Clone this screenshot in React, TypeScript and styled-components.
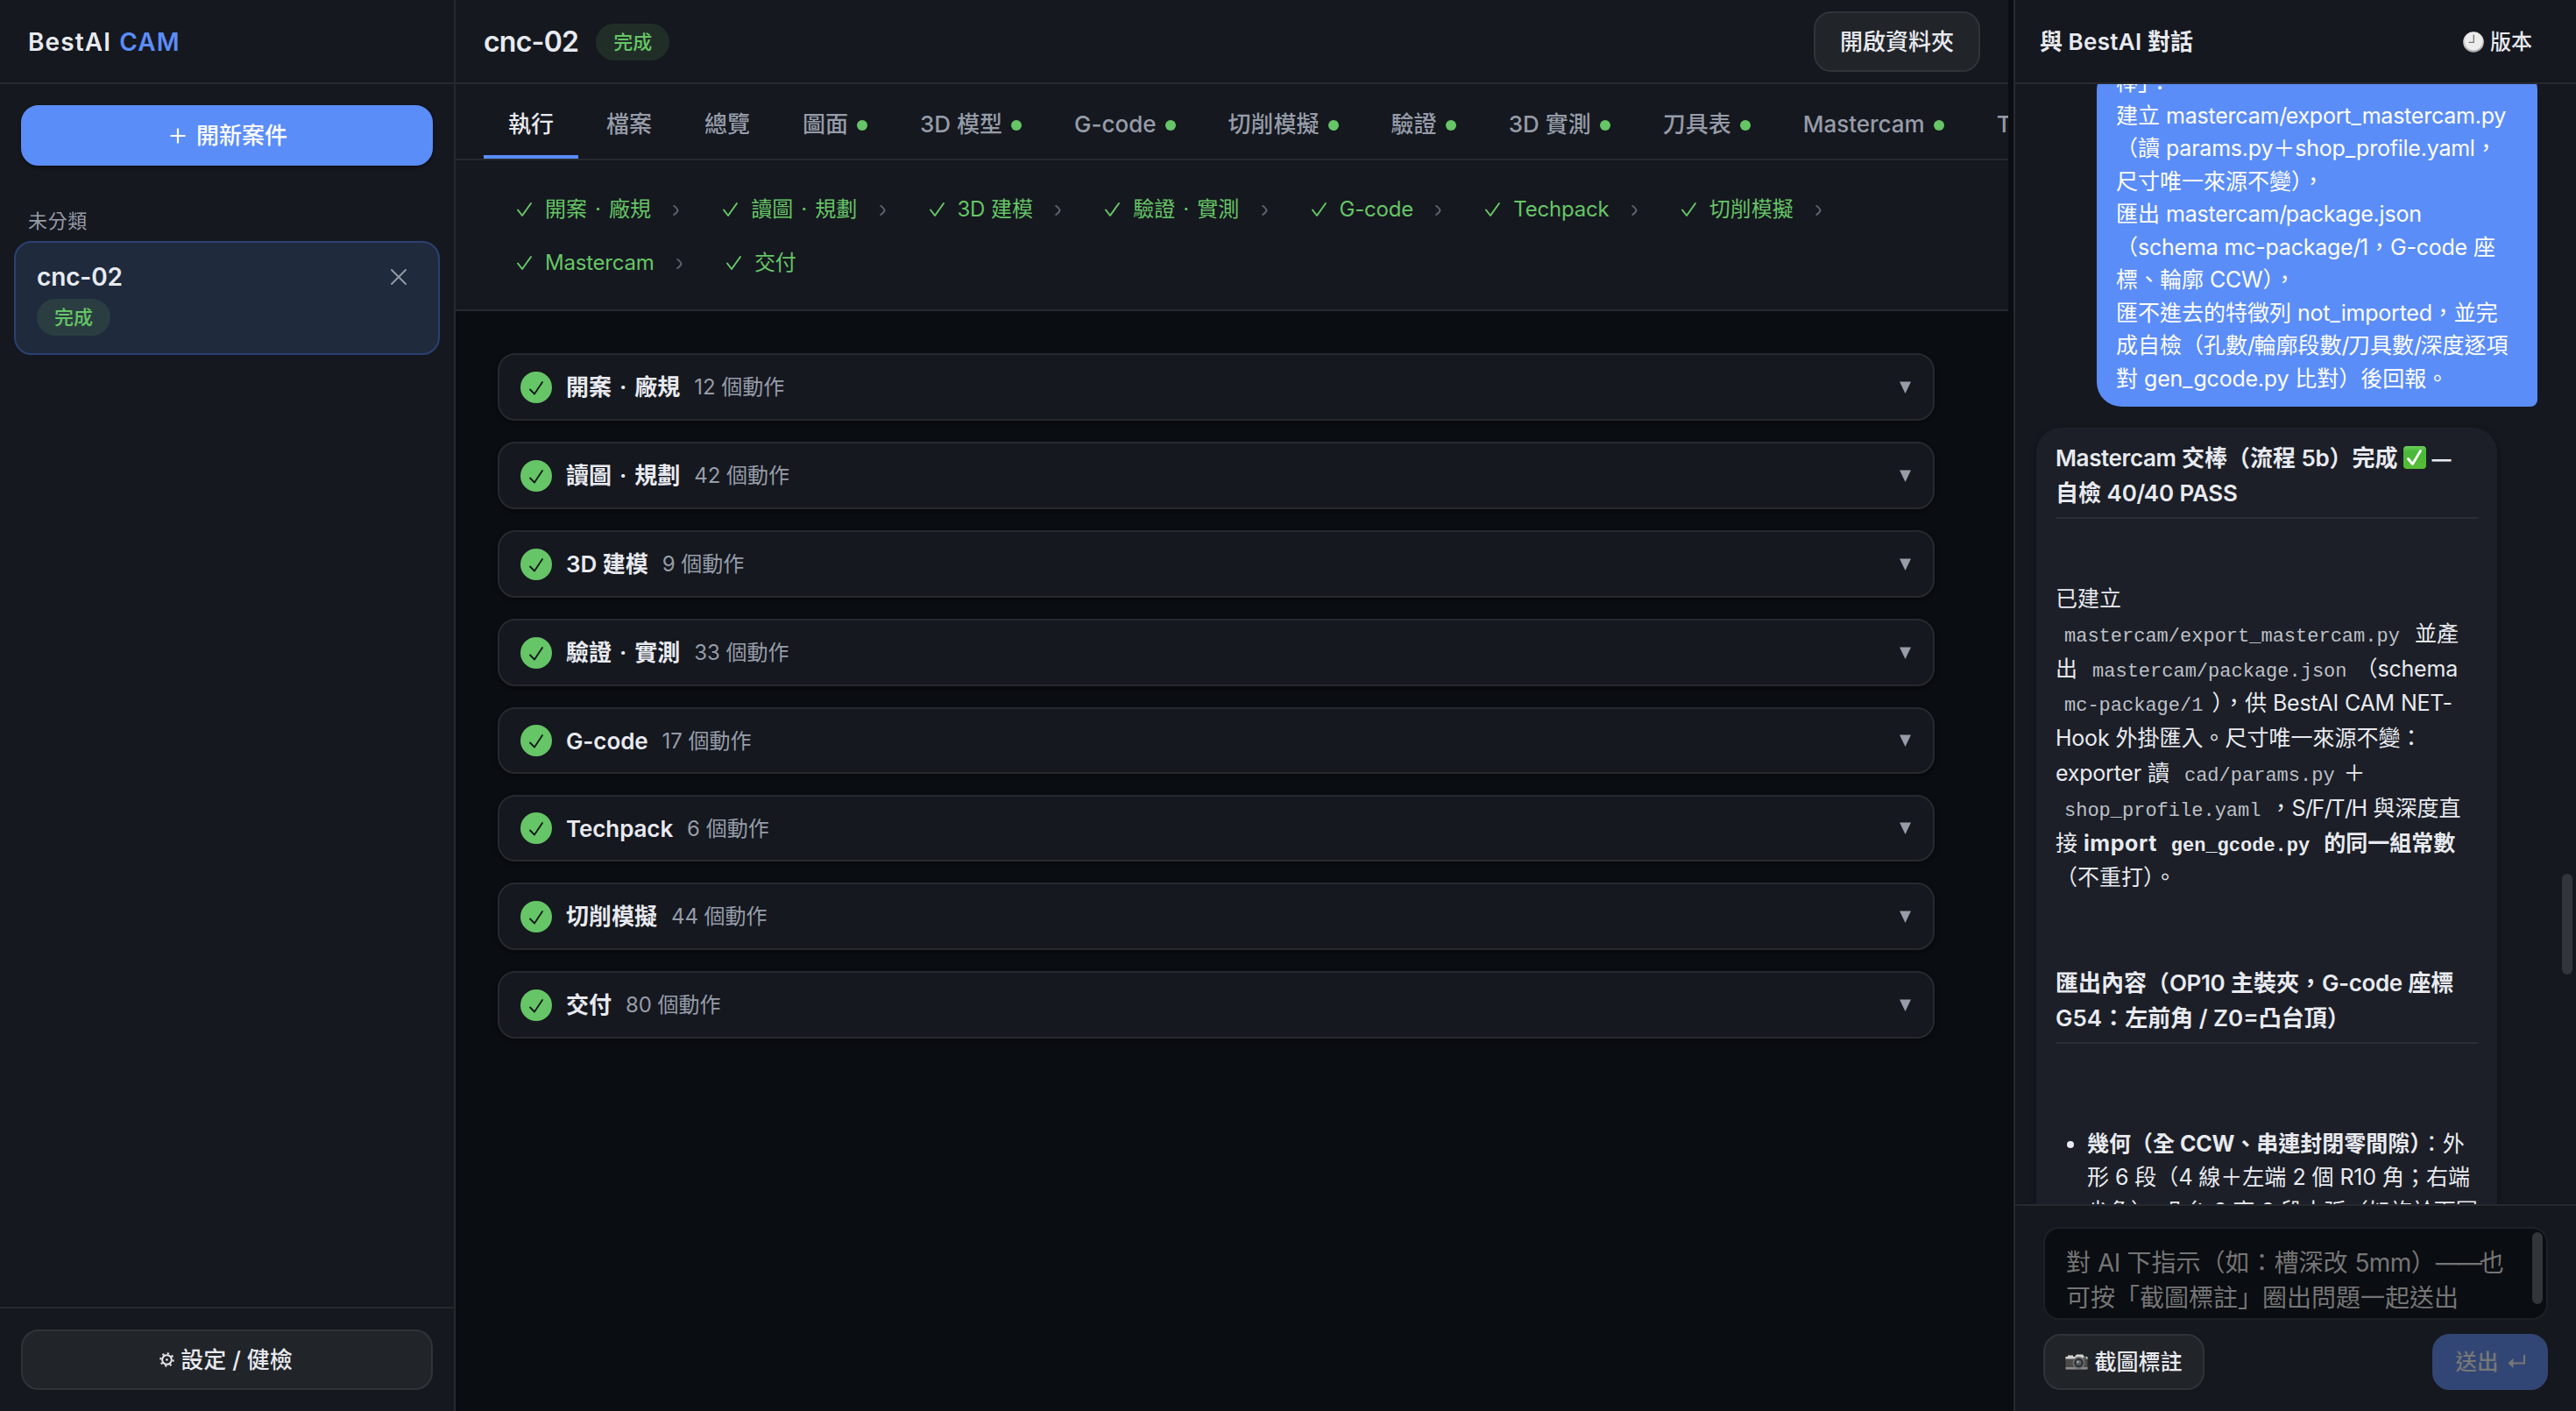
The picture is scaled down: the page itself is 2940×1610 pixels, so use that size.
import React from "react";
import styled, { createGlobalStyle, css } from "styled-components";

const SANS = `Inter, "Noto Sans CJK TC", sans-serif`;
const MONO = `"Courier New", "Liberation Mono", "Noto Sans CJK TC", monospace`;

const c = {
  bg: "#0a0d11",
  panel: "#15181f",
  line: "#26292e",
  text: "#e8eaf0",
  muted: "#969ca8",
  accent: "#5b8df8",
  green: "#66c566",
};

const Global = createGlobalStyle`
  * { box-sizing: border-box; }
  html, body { margin: 0; padding: 0; background: ${c.bg}; }
  body { width: 2940px; height: 1610px; overflow: hidden; }
`;

const Shell = styled.div`
  display: flex;
  width: 2940px;
  height: 1610px;
  background: ${c.bg};
  color: ${c.text};
  font-family: ${SANS};
  font-size: 26px;
  line-height: 36px;
  overflow: hidden;
`;

const Latin = styled.span<{ $track: number }>`
  letter-spacing: ${(p) => p.$track}em;
`;

const MidDot = styled.span`
  margin: 0 0.095em;
`;

/* Splits mixed text so that latin runs, slashes and dashes get their own tracking. */
function Mixed({ children, track = -0.009 }: { children: string; track?: number }) {
  const parts = children.split(/([A-Za-z0-9\-.=]+|\/|_|—+|·)/);
  return (
    <>
      {parts.map((p, i) => {
        if (i % 2 === 0) return p;
        if (p === "·") return <MidDot key={i}>{p}</MidDot>;
        const t = p === "/" ? -0.06 : p === "_" ? 0.04 : p[0] === "—" ? -0.11 : track;
        return <Latin key={i} $track={t}>{p}</Latin>;
      })}
    </>
  );
}

/* ---------- sidebar ---------- */

const Sidebar = styled.aside`
  flex: 0 0 520px;
  display: flex;
  flex-direction: column;
  background: ${c.panel};
  border-right: 2px solid ${c.line};
`;

const barBase = css`
  flex: 0 0 96px;
  display: flex;
  align-items: center;
  background: ${c.panel};
  border-bottom: 2px solid ${c.line};
`;

const Brand = styled.div`
  ${barBase}
  padding: 2px 32px 0;
  gap: 9px;
  font-size: 28px;
  font-weight: 600;
  letter-spacing: 0.04em;
`;

const BrandAccent = styled.span`
  color: ${c.accent};
`;

const Button = styled.button<{ $primary?: boolean }>`
  display: flex;
  align-items: center;
  justify-content: center;
  height: 69px;
  padding: 0 28px;
  border-radius: 20px;
  border: 2px solid ${(p) => (p.$primary ? c.accent : "#303338")};
  background: ${(p) => (p.$primary ? c.accent : "#212428")};
  color: ${(p) => (p.$primary ? "#fff" : c.text)};
  font: 500 26px/36px ${SANS};
  box-shadow: ${(p) => (p.$primary ? "0 2px 4px rgba(0,0,0,0.4)" : "none")};
`;

const NewButton = styled(Button)`
  margin: 24px 24px 0;
  padding: 0 28px 0 32px;
  width: 470px;
  gap: 12px;
`;

const GroupLabel = styled.div`
  margin: 46px 32px 6px;
  height: 34px;
  line-height: 35px;
  font-size: 22px;
  letter-spacing: 0.03em;
  color: ${c.muted};
`;

const CaseCard = styled.div`
  margin: 0 16px;
  width: 486px;
  height: 130px;
  padding: 20px 22px 0 24px;
  border: 2px solid #2b416f;
  border-radius: 20px;
  background: #1f2a3d;
`;

const CaseRow = styled.div`
  display: flex;
  align-items: center;
  justify-content: space-between;
  height: 38px;
  padding-right: 14px;
  font-size: 28px;
  font-weight: 600;
`;

const Badge = styled.span<{ $on?: boolean }>`
  display: flex;
  align-items: center;
  justify-content: center;
  width: 84px;
  height: 42px;
  border-radius: 21px;
  background: ${(p) => (p.$on ? "#2a3e42" : "#212e28")};
  color: ${c.green};
  font-size: 22px;
  font-weight: 500;
`;

const CaseBadge = styled(Badge)`
  margin-top: 6px;
`;

const SideFoot = styled.div`
  margin-top: auto;
  padding: 24px 24px;
  height: 119px;
  border-top: 2px solid ${c.line};
`;

const SettingsButton = styled(Button)`
  width: 470px;
  padding: 0 30px 0 28px;
  gap: 7px;
`;

/* ---------- main ---------- */

const Main = styled.main`
  flex: 0 0 1772px;
  display: flex;
  flex-direction: column;
  overflow: hidden;
`;

const MainHead = styled.header`
  ${barBase}
  padding: 1px 32px 0;
`;

const MainTitle = styled.h1`
  margin: 0 20px 0 0;
  font-size: 32px;
  font-weight: 600;
`;

const OpenButton = styled(Button)`
  margin-left: auto;
`;

const Tabs = styled.nav`
  flex: 0 0 87px;
  display: flex;
  gap: 4px;
  padding-left: 32px;
  overflow: hidden;
  background: ${c.panel};
  border-bottom: 2px solid ${c.line};
`;

const Tab = styled.div<{ $active?: boolean }>`
  flex: none;
  display: flex;
  align-items: center;
  gap: 10px;
  padding: 10px 28px 0;
  border-bottom: 4px solid ${(p) => (p.$active ? c.accent : "transparent")};
  color: ${(p) => (p.$active ? c.text : c.muted)};
  font-weight: 500;
  white-space: nowrap;
`;

const Dot = styled.i`
  width: 12px;
  height: 12px;
  margin-top: 3px;
  border-radius: 50%;
  background: ${c.green};
`;

const Steps = styled.div`
  flex: 0 0 172px;
  display: flex;
  flex-wrap: wrap;
  align-content: flex-start;
  row-gap: 25px;
  padding: 38px 40px 0 68px;
  background: ${c.panel};
  border-bottom: 2px solid ${c.line};
  color: ${c.green};
  font-size: 24px;
`;

const Step = styled.div`
  display: flex;
  align-items: center;
  height: 36px;
  margin-right: 46.8px;
  white-space: nowrap;
`;

const StepLabel = styled.span`
  margin: 0 24.5px 1px 14px;
`;

const Groups = styled.div`
  display: flex;
  flex-direction: column;
  gap: 24px;
  padding: 48px 84px 0 48px;
`;

const Group = styled.section<{ $short?: boolean }>`
  display: flex;
  align-items: center;
  height: ${(p) => (p.$short ? 76 : 77)}px;
  padding: 0 24px;
  border: 2px solid ${c.line};
  border-radius: 20px;
  background: ${c.panel};
  box-shadow: 0 2px 4px rgba(0, 0, 0, 0.4);
`;

const Disc = styled.span`
  display: flex;
  align-items: center;
  justify-content: center;
  width: 36px;
  height: 36px;
  border-radius: 50%;
  background: ${c.green};
`;

const GroupTitle = styled.h2`
  margin: 0 16px;
  padding-top: 1px;
  font-size: 26px;
  font-weight: 600;
`;

const GroupCount = styled.span`
  padding-top: 1px;
  font-size: 24px;
  color: ${c.muted};
`;

const Caret = styled.svg`
  margin-left: auto;
`;

/* ---------- chat ---------- */

const Chat = styled.aside`
  flex: 0 0 642px;
  display: flex;
  flex-direction: column;
  margin-left: 6px;
  background: ${c.panel};
  border-left: 2px solid ${c.line};
`;

const ChatHead = styled.header`
  ${barBase}
  justify-content: space-between;
  padding: 1px 50px 0 28px;
  font-weight: 600;
`;

const Version = styled.span`
  display: flex;
  align-items: center;
  gap: 7px;
  font-size: 24px;
  font-weight: 500;
`;

const Thread = styled.div`
  position: relative;
  flex: 0 0 1278px;
  display: flex;
  flex-direction: column;
  overflow: hidden;
`;

const UserBubble = styled.div`
  align-self: flex-end;
  flex: none;
  width: 503px;
  margin: -21px 44px 0 0;
  padding: 1px 0 13px 22px;
  border-radius: 28px 28px 8px 28px;
  background: ${c.accent};
  color: #fff;
  font-size: 25px;
`;

const Line = styled.div<{ $h: number }>`
  height: ${(p) => p.$h}px;
  line-height: ${(p) => p.$h}px;
  white-space: pre;
`;

const AiBubble = styled.div`
  flex: none;
  width: 526px;
  height: 1000px;
  margin: 24px 0 0 24px;
  padding: 15px 22px;
  border-radius: 28px 28px 0 0;
  background: #1c1f27;
  box-shadow: 0 2px 6px rgba(0, 0, 0, 0.35);
  font-size: 25px;
`;

const Heading = styled.div`
  padding-bottom: 7px;
  border-bottom: 2px solid #2b2e36;
  font-size: 26px;
  font-weight: 600;
`;

const Dash = styled.span`
  font-size: 22px;
  font-weight: 700;
`;

const Para = styled.div`
  margin: 72px 0 80px;
`;

const Strong = styled.b`
  font-weight: 700;
`;

const Code = styled.code`
  padding: 0 10px;
  font-family: ${MONO};
  font-size: 22px;
  color: #bdc0c7;
  ${Strong} & {
    color: ${c.text};
  }
`;

const Bullets = styled.ul`
  margin: 94.5px 0 0;
  padding: 0 0 0 36px;
`;

const Bar = styled.i<{ $h: number; $x: number; $y: number }>`
  position: absolute;
  right: ${(p) => p.$x}px;
  top: ${(p) => p.$y}px;
  width: 12px;
  height: ${(p) => p.$h}px;
  border-radius: 6px;
  background: #323539;
`;

const Composer = styled.footer`
  flex: 1;
  padding: 24px 32px;
  border-top: 2px solid ${c.line};
`;

const Input = styled.div`
  position: relative;
  height: 106px;
  padding: 19px 24px;
  border: 2px solid #1d2024;
  border-radius: 18px;
  background: ${c.bg};
  color: #757575;
  font-size: 28px;
`;

const Actions = styled.div`
  display: flex;
  justify-content: space-between;
  margin-top: 16px;
`;

const ShotButton = styled(Button)`
  height: 64px;
  width: 184px;
  padding: 0;
  gap: 7px;
  font-size: 25px;
`;

const SendButton = styled(Button)`
  height: 64px;
  width: 132px;
  padding: 0;
  gap: 10px;
  border-color: #324675;
  background: #324675;
  color: #777;
  font-size: 24.5px;
`;

/* ---------- icons ---------- */

const Tick = () => (
  <svg width="20" height="18" viewBox="0 0 20 18" fill="none" stroke="currentColor" strokeWidth="2" strokeLinecap="round" strokeLinejoin="round">
    <path d="M3 9.5 8 16 18 2" />
  </svg>
);

const Chevron = () => (
  <svg width="9" height="14" viewBox="0 0 9 14" fill="none" stroke="#5d626c" strokeWidth="2">
    <path d="M1.5 2.5 Q6 5.5 6.5 8 Q6 10.5 1.5 13.5" />
  </svg>
);

const DiscTick = () => (
  <svg width="36" height="36" viewBox="0 0 36 36" fill="none" stroke="#12161b" strokeWidth="1.8" strokeLinecap="round" strokeLinejoin="round">
    <path d="M11 20.5 16 25.5 25 12" />
  </svg>
);

const Plus = () => (
  <svg width="18" height="18" viewBox="0 0 18 18" stroke="#fff" strokeWidth="2.2">
    <path d="M9 0.5V17.5M0.5 9H17.5" />
  </svg>
);

const Cross = () => (
  <svg width="18" height="18" viewBox="0 0 18 18" stroke={c.muted} strokeWidth="1.8" strokeLinecap="round">
    <path d="M1 1 17 17M17 1 1 17" />
  </svg>
);

const Gear = () => (
  <svg width="17" height="17" viewBox="0 0 16 16" fill="none" stroke={c.text}>
    <circle cx="8" cy="8" r="5" strokeWidth="1.8" />
    <circle cx="8" cy="8" r="1.2" fill={c.text} stroke="none" />
    <circle cx="8" cy="8" r="6.8" strokeWidth="2" strokeDasharray="2.1 3.24" />
  </svg>
);

const Clock = () => (
  <svg width="24" height="24" viewBox="0 0 24 24">
    <defs>
      <linearGradient id="rim" x1="0" y1="0" x2="0" y2="1">
        <stop offset="0" stopColor="#f4f4f4" />
        <stop offset="1" stopColor="#a9a9ab" />
      </linearGradient>
    </defs>
    <circle cx="12" cy="12" r="11.8" fill="url(#rim)" />
    <circle cx="12" cy="11.6" r="10" fill="#ececec" />
    <path d="M12.3 3.5V12.3H6.5" fill="none" stroke="#77777a" strokeWidth="1.3" />
  </svg>
);

const Camera = () => (
  <svg width="26" height="18" viewBox="0 0 26 18">
    <path d="M0.5 3H3V1.5H9V3H11L13 0.5H20L22 3H25.5V6H0.5Z" fill="#d4d3ce" />
    <rect x="0.5" y="5.5" width="25" height="12" rx="1" fill="#4b4b4a" />
    <rect x="0.5" y="15" width="25" height="2.5" fill="#8d8c88" />
    <circle cx="15.5" cy="10" r="7" fill="#6f7172" />
    <circle cx="15.5" cy="10" r="5.3" fill="#2d3033" />
    <circle cx="15.5" cy="10" r="3.2" fill="#55595e" />
    <circle cx="14.5" cy="9" r="1.3" fill="#a9afb5" />
    <rect x="20.5" y="3.5" width="3.5" height="2" fill="#4b4b4a" />
  </svg>
);

const CheckBoxSvg = styled.svg`
  vertical-align: -3px;
`;

const CheckBox = () => (
  <CheckBoxSvg width="26" height="26" viewBox="0 0 26 26">
    <defs>
      <linearGradient id="box" x1="0" y1="0" x2="0" y2="1">
        <stop offset="0" stopColor="#6cd05a" />
        <stop offset="0.25" stopColor="#48b83a" />
        <stop offset="1" stopColor="#57bd35" />
      </linearGradient>
    </defs>
    <rect width="26" height="26" rx="4" fill="url(#box)" />
    <path d="M5.5 14.5 10.5 20.5 19.5 5.5" fill="none" stroke="#fff" strokeWidth="2.8" strokeLinecap="round" strokeLinejoin="round" />
  </CheckBoxSvg>
);

const Return = () => (
  <svg width="20" height="18" viewBox="0 0 20 18">
    <path d="M19 1V10.5H5" fill="none" stroke="#777" strokeWidth="2" />
    <path d="M0.5 10.5 6.5 5V16Z" fill="#777" />
  </svg>
);

/* ---------- data ---------- */

const tabs: { label: string; dot?: boolean; active?: boolean }[] = [
  { label: "執行", active: true },
  { label: "檔案" },
  { label: "總覽" },
  { label: "圖面", dot: true },
  { label: "3D 模型", dot: true },
  { label: "G-code", dot: true },
  { label: "切削模擬", dot: true },
  { label: "驗證", dot: true },
  { label: "3D 實測", dot: true },
  { label: "刀具表", dot: true },
  { label: "Mastercam", dot: true },
  { label: "Techpack", dot: true },
];

const steps = ["開案 · 廠規", "讀圖 · 規劃", "3D 建模", "驗證 · 實測", "G-code", "Techpack", "切削模擬", "Mastercam", "交付"];

const groups: { title: string; count: number; short?: boolean }[] = [
  { title: "開案 · 廠規", count: 12 },
  { title: "讀圖 · 規劃", count: 42 },
  { title: "3D 建模", count: 9 },
  { title: "驗證 · 實測", count: 33 },
  { title: "G-code", count: 17, short: true },
  { title: "Techpack", count: 6, short: true },
  { title: "切削模擬", count: 44 },
  { title: "交付", count: 80 },
];

const request = [
  "棒」：",
  "建立 mastercam/export_mastercam.py",
  "（讀 params.py＋shop_profile.yaml，",
  "尺寸唯一來源不變），",
  "匯出 mastercam/package.json",
  "（schema mc-package/1，G-code 座",
  "標、輪廓 CCW），",
  "匯不進去的特徵列 not_imported，並完",
  "成自檢（孔數/輪廓段數/刀具數/深度逐項",
  "對 gen_gcode.py 比對）後回報。",
];

const H1 = 40;
const P = 39.8;
const LI = 38.75;

export default function App() {
  return (
    <Shell>
      <Global />
      <Sidebar>
        <Brand>
          <span>BestAI</span>
          <BrandAccent>CAM</BrandAccent>
        </Brand>
        <NewButton $primary>
          <Plus />
          開新案件
        </NewButton>
        <GroupLabel>未分類</GroupLabel>
        <CaseCard>
          <CaseRow>
            <span><Mixed track={-0.005}>cnc-02</Mixed></span>
            <Cross />
          </CaseRow>
          <CaseBadge $on>完成</CaseBadge>
        </CaseCard>
        <SideFoot>
          <SettingsButton>
            <Gear />
            設定 / 健檢
          </SettingsButton>
        </SideFoot>
      </Sidebar>

      <Main>
        <MainHead>
          <MainTitle><Mixed track={-0.024}>cnc-02</Mixed></MainTitle>
          <Badge>完成</Badge>
          <OpenButton>開啟資料夾</OpenButton>
        </MainHead>
        <Tabs>
          {tabs.map((t) => (
            <Tab key={t.label} $active={t.active}>
              <span><Mixed track={0}>{t.label}</Mixed></span>
              {t.dot && <Dot />}
            </Tab>
          ))}
        </Tabs>
        <Steps>
          {steps.map((s, i) => (
            <Step key={s}>
              <Tick />
              <StepLabel><Mixed>{s}</Mixed></StepLabel>
              {i < steps.length - 1 && <Chevron />}
            </Step>
          ))}
        </Steps>
        <Groups>
          {groups.map((g) => (
            <Group key={g.title} $short={g.short}>
              <Disc><DiscTick /></Disc>
              <GroupTitle><Mixed track={-0.004}>{g.title}</Mixed></GroupTitle>
              <GroupCount><Mixed track={-0.004}>{`${g.count} 個動作`}</Mixed></GroupCount>
              <Caret width="14" height="14" viewBox="0 0 14 14"><path d="M0 0.5H13L6.5 14Z" fill={c.muted} /></Caret>
            </Group>
          ))}
        </Groups>
      </Main>

      <Chat>
        <ChatHead>
          <span><Mixed track={0.012}>與 BestAI 對話</Mixed></span>
          <Version><Clock />版本</Version>
        </ChatHead>
        <Thread>
          <UserBubble>
            {request.map((l) => (
              <Line key={l} $h={37.5}><Mixed>{l}</Mixed></Line>
            ))}
          </UserBubble>
          <AiBubble>
            <Heading>
              <Line $h={H1}><Mixed track={-0.015}>Mastercam 交棒（流程 5b）完成 </Mixed><CheckBox /> <Dash>—</Dash></Line>
              <Line $h={H1}><Mixed>自檢 40/40 PASS</Mixed></Line>
            </Heading>
            <Para>
              <Line $h={P}>已建立</Line>
              <Line $h={P}><Code>mastercam/export_mastercam.py</Code> 並產</Line>
              <Line $h={P}>出 <Code>mastercam/package.json</Code>（<Mixed>schema</Mixed></Line>
              <Line $h={P}><Code>mc-package/1</Code><Mixed>），供 BestAI CAM NET-</Mixed></Line>
              <Line $h={P}><Mixed>Hook 外掛匯入。尺寸唯一來源不變：</Mixed></Line>
              <Line $h={P}><Mixed>exporter 讀 </Mixed><Code>cad/params.py</Code>＋</Line>
              <Line $h={P}><Code>shop_profile.yaml</Code><Mixed track={-0.02}>，S/F/T/H 與深度直</Mixed></Line>
              <Line $h={P}>接 <Strong><Mixed track={0.022}>import </Mixed><Code>gen_gcode.py</Code> 的同一組常數</Strong></Line>
              <Line $h={P}>（不重打）。</Line>
            </Para>
            <Heading>
              <Line $h={H1}><Mixed track={-0.015}>匯出內容（OP10 主裝夾，G-code 座標</Mixed></Line>
              <Line $h={H1}>G54：左前角 / Z0=凸台頂）</Line>
            </Heading>
            <Bullets>
              <li>
                <Line $h={LI}><Strong><Mixed>幾何（全 CCW、串連封閉零間隙）</Mixed></Strong>：外</Line>
                <Line $h={LI}><Mixed>形 6 段（4 線＋左端 2 個 R10 角；右端</Mixed></Line>
                <Line $h={LI}><Mixed>尖角）、凸台 2 高 2 段大弧（如旋於下圖</Mixed></Line>
              </li>
            </Bullets>
          </AiBubble>
          <Bar $h={115} $x={4} $y={901} />
        </Thread>
        <Composer>
          <Input>
            <Line $h={40}><Mixed track={-0.02}>對 AI 下指示（如：槽深改 5mm）——也</Mixed></Line>
            <Line $h={40}>可按「截圖標註」圈出問題一起送出</Line>
            <Bar $h={82} $x={4} $y={4} />
          </Input>
          <Actions>
            <ShotButton><Camera />截圖標註</ShotButton>
            <SendButton>送出<Return /></SendButton>
          </Actions>
        </Composer>
      </Chat>
    </Shell>
  );
}
